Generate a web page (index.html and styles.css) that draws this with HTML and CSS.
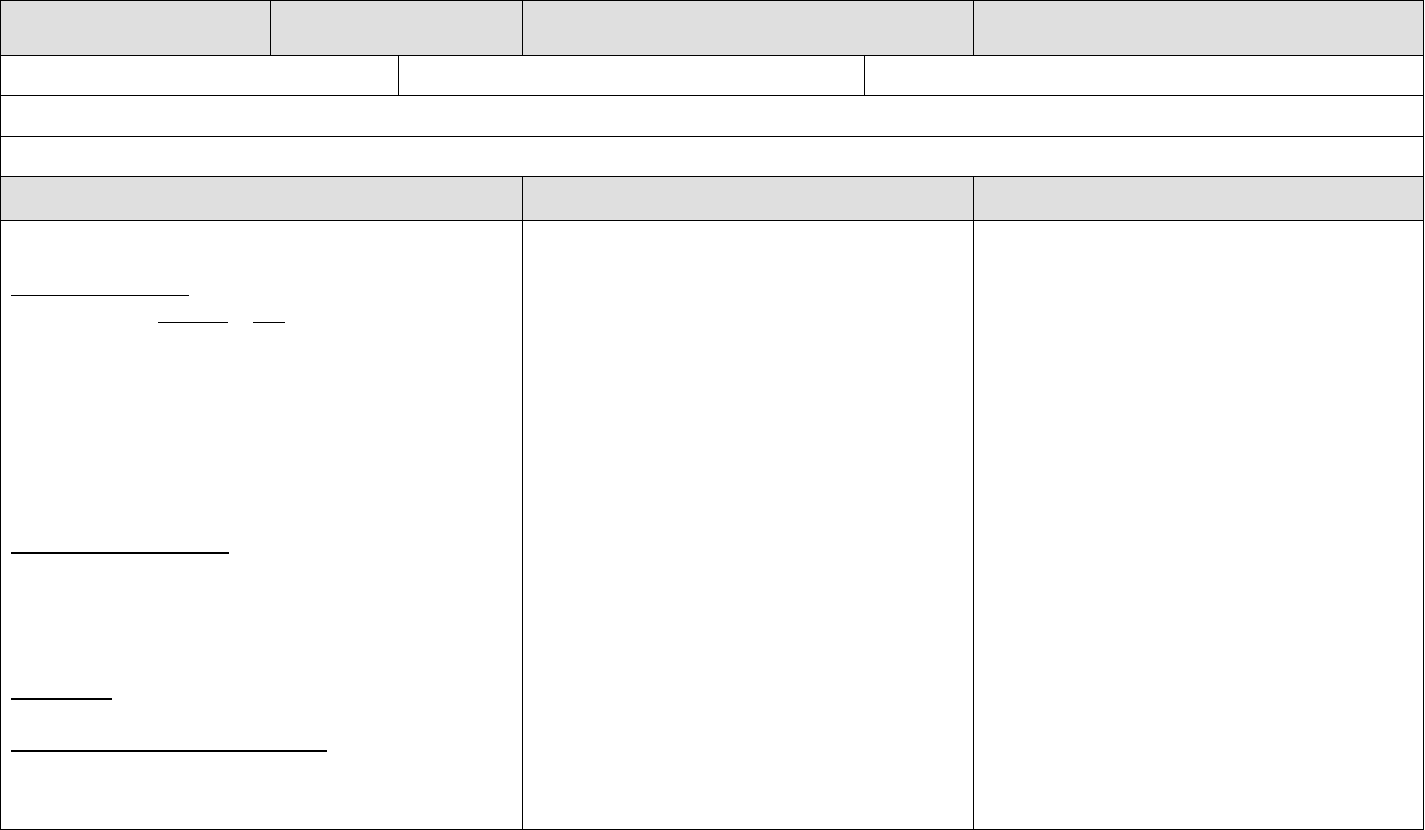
FILE: index.html
```html
<!DOCTYPE html>
<html lang="en">
<head>
    <meta charset="UTF-8">
    <meta name="viewport" content="width=device-width, initial-scale=1.0">
    <title>Form</title>
    <link rel="stylesheet" href="styles.css">
</head>
<body>
    <div class="sheet">
        <!-- row 1: header -->
        <div class="cell head r1 span-a"></div>
        <div class="cell head r1 span-b"></div>
        <div class="cell head r1 span-c"></div>
        <div class="cell head r1 span-d"></div>

        <!-- row 2 -->
        <div class="cell r2 span-e"></div>
        <div class="cell r2 span-f"></div>
        <div class="cell r2 span-g"></div>

        <!-- rows 3 and 4: full width -->
        <div class="cell r3 span-all"></div>
        <div class="cell r4 span-all"></div>

        <!-- row 5: section header -->
        <div class="cell head r5 span-h"></div>
        <div class="cell head r5 span-c"></div>
        <div class="cell head r5 span-d"></div>

        <!-- row 6: body -->
        <div class="cell body r6 span-h">
            <div class="blank thin line-a"></div>
            <div class="blank-row">
                <div class="blank thin line-b1"></div>
                <div class="blank thin line-b2"></div>
            </div>
            <div class="blank thick line-c"></div>
            <div class="blank thick line-d"></div>
            <div class="blank thick line-e"></div>
        </div>
        <div class="cell r6 span-c"></div>
        <div class="cell r6 span-d"></div>
    </div>
</body>
</html>
```

FILE: styles.css
```css
* {
    margin: 0;
    padding: 0;
    box-sizing: border-box;
}

body {
    font-family: "Liberation Sans", Arial, sans-serif;
    background: #fff;
}

.sheet {
    display: grid;
    grid-template-columns: 270px 128px 124px 342px 109px 450px;
    grid-template-rows: 55px 40px 41px 40px 44px 609px;
    width: 1424px;
    border-top: 1px solid #000;
    border-left: 1px solid #000;
}

.cell {
    border-right: 1px solid #000;
    border-bottom: 1px solid #000;
}

.head {
    background: #dfdfdf;
}

.span-a { grid-column: 1 / 2; }
.span-b { grid-column: 2 / 4; }
.span-c { grid-column: 4 / 6; }
.span-d { grid-column: 6 / 7; }
.span-e { grid-column: 1 / 3; }
.span-f { grid-column: 3 / 5; }
.span-g { grid-column: 5 / 7; }
.span-h { grid-column: 1 / 4; }
.span-all { grid-column: 1 / 7; }

.body {
    padding: 0 10px;
}

.blank {
    height: 0;
    border-top: 1px solid #000;
}

.blank.thick {
    border-top-width: 2px;
}

.blank-row {
    display: flex;
    gap: 25px;
    margin-top: 26px;
    padding-left: 147px;
}

.line-a { width: 178px; margin-top: 74px; }
.line-b1 { width: 70px; }
.line-b2 { width: 32px; }
.line-c { width: 218px; margin-top: 229px; }
.line-d { width: 101px; margin-top: 144px; }
.line-e { width: 316px; margin-top: 50px; }
```
